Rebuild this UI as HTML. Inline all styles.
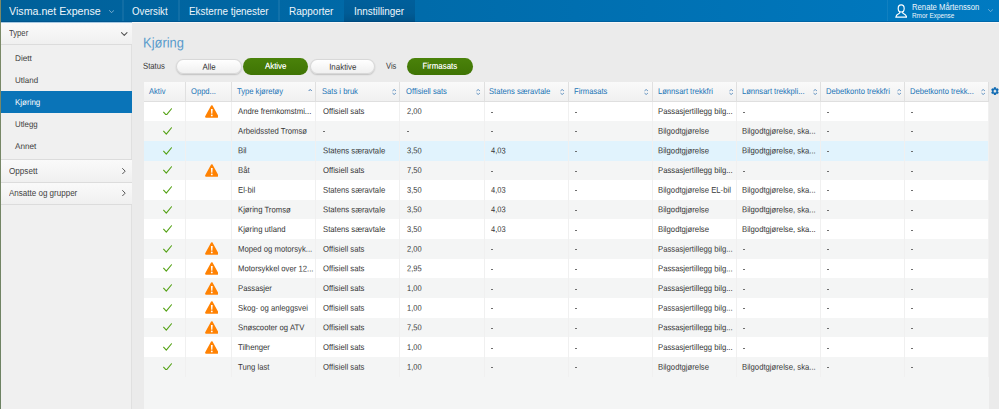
<!DOCTYPE html>
<html><head><meta charset="utf-8"><title>Kjøring</title>
<style>
*{box-sizing:border-box;margin:0;padding:0}
html,body{width:999px;height:409px;overflow:hidden}
body{font-family:"Liberation Sans",sans-serif;background:#ebebeb;position:relative;color:#333}
.x{display:inline-block;white-space:nowrap}
#edge{position:absolute;left:0;top:0;width:1px;height:409px;background:linear-gradient(#7c8a68,#6d8263);z-index:10}
#nav{position:absolute;left:0;top:0;width:999px;height:21.7px;background:linear-gradient(90deg,#006099,#007ac1);color:#fff}
#nav:after{content:'';position:absolute;left:0;bottom:0;width:999px;height:1px;background:rgba(0,40,90,.22)}
#nav .t{position:absolute;top:0;height:21px;line-height:22.6px;font-size:11.1px;white-space:nowrap;color:#eef6fb}
#nav .sep{position:absolute;top:0;width:1.4px;height:21px;background:rgba(255,255,255,.065)}
#nav .act{position:absolute;left:343.7px;top:0;width:71.5px;height:21.7px;background:linear-gradient(#005f9b,#005c96 60%,#005287)}
#navhl{position:absolute;left:132px;top:22px;width:867px;height:1px;background:#f7f7f7}
#side{position:absolute;left:1px;top:22px;width:131.3px;height:387px;background:#f0f0f0;border-right:1px solid #e0e0e0}
#side div{position:absolute;left:0;width:131px;height:22px;line-height:23.1px;font-size:8.3px;color:#424242;white-space:nowrap}
#side .h{padding-left:8.4px;width:130.5px;background:linear-gradient(#fafafa,#f0f0f0);}
#side .i{padding-left:13.9px;width:130px;line-height:23.1px}
#side .sel{background:#0a74b8;color:#fff;width:131px}
#side .ln{height:1px;background:#dcdcdc}
h1{position:absolute;left:143.3px;top:34.2px;font-size:14.2px;font-weight:normal;color:#5a9bcb;line-height:16px}
.lbl{position:absolute;font-size:8.6px;line-height:10px;color:#333}
.pill{position:absolute;top:58.5px;height:15.7px;border-radius:7.4px/7.85px;font-size:8.6px;line-height:15.2px;text-align:center;color:#333;background:linear-gradient(#fff,#f0f0f0);border:1px solid #d8d8d8;box-shadow:0 1px 1.5px rgba(0,0,0,.18)}
.pill.g{top:57.7px;height:16.9px;border-radius:7.8px/8.45px;line-height:17.5px;background:linear-gradient(#4a820a,#3f7404);border:0;color:#fff;box-shadow:none;text-shadow:0 0 .5px rgba(255,255,255,.7)}
#gridbg{position:absolute;left:144px;top:82px;width:845.3px;height:327px;background:#f4f5f5}
#hdr{position:absolute;left:144px;top:82.3px;width:845.3px;height:19.7px;background:linear-gradient(#fafafa,#f0f0f0);border-bottom:1px solid #dfdfdf}
.hc{position:absolute;top:82.3px;height:19.1px;line-height:19.7px;font-size:8.4px;color:#2174b6;padding-left:5.3px;border-right:1px solid #e0e0e0;white-space:nowrap;overflow:hidden}
.so{position:absolute;right:3.1px;top:6.5px}
.row{position:absolute;left:144px;width:845.3px}
.row.w{background:#fff}
.row.s{background:#e1f3fd}
.c{position:absolute;font-size:8.4px;color:#363636;border-right:1px solid #f0f0f0;white-space:nowrap;overflow:hidden}
.ct{position:absolute;left:6.6px;top:0;height:20px;line-height:20px}
.d{position:absolute;width:2.3px;height:1px;background:#6e6e6e}
.ck{position:absolute;left:18.8px;top:5.8px}
.wn{position:absolute;left:18.6px;top:3.4px}
</style></head><body>
<div id="edge"></div>
<div id="nav"><div class="act"></div><div class="sep" style="left:122.2px"></div><div class="sep" style="left:178.4px"></div><div class="sep" style="left:278.40000000000003px"></div><div class="sep" style="left:886.5px"></div><div class="t" style="left:9px;font-size:11.4px"><span class="x" style="transform:scaleX(0.9366);transform-origin:0 50%">Visma.net Expense</span></div><svg viewBox="0 0 8 5" width="5.2" height="3.3" style="position:absolute;left:108.6px;top:9.6px"><path d="M0.6 0.7 L4 4.1 L7.4 0.7" fill="none" stroke="#b9d6ea" stroke-width="1.0" stroke-linecap="round" stroke-linejoin="round"/></svg><div class="t" style="left:132.4px"><span class="x" style="transform:scaleX(0.8746);transform-origin:0 50%">Oversikt</span></div><div class="t" style="left:188.5px"><span class="x" style="transform:scaleX(0.8897);transform-origin:0 50%">Eksterne tjenester</span></div><div class="t" style="left:289.4px"><span class="x" style="transform:scaleX(0.8995);transform-origin:0 50%">Rapporter</span></div><div class="t" style="left:354.4px"><span class="x" style="transform:scaleX(0.8941);transform-origin:0 50%">Innstillinger</span></div><svg viewBox="0 0 12.4 14" width="12.4" height="14" style="position:absolute;left:894.5px;top:3.5px"><path d="M4.7 7.4 L4.7 9.1 C3.2 9.9 1 10.5 0.8 13.2 L11.6 13.2 C11.4 10.5 9.2 9.9 7.7 9.1 L7.7 7.4" fill="none" stroke="#fff" stroke-width="1.15" stroke-linejoin="round" stroke-linecap="round"/><ellipse cx="6.2" cy="4.4" rx="3" ry="3.6" fill="#0077bc" stroke="#fff" stroke-width="1.15"/></svg><div class="t" style="left:911.8px;top:2.2px;height:10px;line-height:10px;font-size:8.5px"><span class="x" style="transform:scaleX(0.9059);transform-origin:0 50%">Renate Mårtensson</span></div><div class="t" style="left:911.8px;top:11px;height:9px;line-height:9px;font-size:7.4px"><span class="x" style="transform:scaleX(0.8663);transform-origin:0 50%">Rmor Expense</span></div><svg viewBox="0 0 8 5" width="5.2" height="3.3" style="position:absolute;left:987.6px;top:9.1px"><path d="M0.6 0.7 L4 4.1 L7.4 0.7" fill="none" stroke="#a5cbe5" stroke-width="1.0" stroke-linecap="round" stroke-linejoin="round"/></svg></div><div id="navhl"></div>
<div id="side"><div class="h" style="top:0"><span class="x" style="transform:scaleX(0.9249);transform-origin:0 50%">Typer</span></div><div class="ln" style="top:22px"></div><div class="ln" style="top:0;background:#a5c9e3"></div><div class="i" style="top:25px"><span class="x" style="transform:translateY(0.00px) scaleX(0.9903) skewY(0.03deg);transform-origin:0 50%">Diett</span></div><div class="i" style="top:47px"><span class="x" style="transform:translateY(0.00px) scaleX(0.9628) skewY(0.03deg);transform-origin:0 50%">Utland</span></div><div class="i sel" style="top:69px"><span class="x" style="transform:translateY(0.00px) scaleX(0.9623) skewY(0.03deg);transform-origin:0 50%">Kjøring</span></div><div class="i" style="top:91px"><span class="x" style="transform:translateY(0.00px) scaleX(0.9461) skewY(0.03deg);transform-origin:0 50%">Utlegg</span></div><div class="i" style="top:113px"><span class="x" style="transform:translateY(0.00px) scaleX(0.9820) skewY(0.03deg);transform-origin:0 50%">Annet</span></div><div class="h" style="top:138px"><span class="x" style="transform:scaleX(0.9771);transform-origin:0 50%">Oppsett</span></div><div class="h" style="top:160px"><span class="x" style="transform:scaleX(0.9674);transform-origin:0 50%">Ansatte og grupper</span></div><div class="ln" style="top:137.4px"></div><div class="ln" style="top:160px"></div><div class="ln" style="top:182px"></div><svg viewBox="0 0 8 5" width="6.5" height="4.1" style="position:absolute;left:120.1px;top:9.9px"><path d="M0.6 0.7 L4 4.1 L7.4 0.7" fill="none" stroke="#505050" stroke-width="1.25" stroke-linecap="round" stroke-linejoin="round"/></svg><svg viewBox="0 0 5 8" width="3.9" height="6.3" style="position:absolute;left:121.2px;top:146.2px"><path d="M0.7 0.6 L4.1 4 L0.7 7.4" fill="none" stroke="#505050" stroke-width="1.25" stroke-linecap="round" stroke-linejoin="round"/></svg><svg viewBox="0 0 5 8" width="3.9" height="6.3" style="position:absolute;left:121.2px;top:168.2px"><path d="M0.7 0.6 L4.1 4 L0.7 7.4" fill="none" stroke="#505050" stroke-width="1.25" stroke-linecap="round" stroke-linejoin="round"/></svg></div>
<h1><span class="x" style="transform:translateY(0.60px) scaleX(0.9115) skewY(0.03deg);transform-origin:0 50%">Kjøring</span></h1><div class="lbl" style="left:143.4px;top:60px"><span class="x" style="transform:translateY(0.80px) scaleX(0.8982) skewY(0.03deg);transform-origin:0 50%">Status</span></div><div class="pill" style="left:176.2px;width:65.9px"><span class="x" style="transform:translateY(-0.20px) scaleX(0.9210) skewY(0.03deg);transform-origin:50% 50%">Alle</span></div><div class="pill g" style="left:242.7px;width:65.8px"><span class="x" style="transform:translateY(-0.20px) scaleX(0.9210) skewY(0.03deg);transform-origin:50% 50%">Aktive</span></div><div class="pill" style="left:309.9px;width:65.4px"><span class="x" style="transform:translateY(-0.20px) scaleX(0.9210) skewY(0.03deg);transform-origin:50% 50%">Inaktive</span></div><div class="lbl" style="left:385.6px;top:60px"><span class="x" style="transform:translateY(0.80px) scaleX(0.8819) skewY(0.03deg);transform-origin:0 50%">Vis</span></div><div class="pill g" style="left:406.5px;width:66.2px"><span class="x" style="transform:translateY(-0.20px) scaleX(0.9210) skewY(0.03deg);transform-origin:50% 50%">Firmasats</span></div>
<div id="gridbg"></div><div id="hdr"></div><div class="hc" style="left:144.0px;width:42.0px;padding-left:5.3px"><span class="x" style="transform:translateY(0.00px) scaleX(0.9080) skewY(0.03deg);transform-origin:0 50%">Aktiv</span></div><div class="hc" style="left:186.0px;width:45.87px;padding-left:5.3px"><span class="x" style="transform:translateY(0.00px) scaleX(0.9080) skewY(0.03deg);transform-origin:0 50%">Oppd...</span></div><div class="hc" style="left:231.87px;width:84.33px;padding-left:5.5px"><span class="x" style="transform:translateY(0.00px) scaleX(0.9080) skewY(0.03deg);transform-origin:0 50%">Type kjøretøy</span><svg class="so" style="top:6.3px;right:2.9px" viewBox="0 0 44 26" width="4.4" height="2.6"><path d="M4 22 L22 5 L40 22" fill="none" stroke="#3f78b2" stroke-width="9.5" stroke-linecap="round" stroke-linejoin="round"/></svg></div><div class="hc" style="left:316.2px;width:84.3px;padding-left:5.6px"><span class="x" style="transform:translateY(0.00px) scaleX(0.9080) skewY(0.03deg);transform-origin:0 50%">Sats i bruk</span><svg class="so" viewBox="0 0 44 60" width="4.4" height="6"><path d="M5 19 L22 5 L39 19 M5 41 L22 55 L39 41" fill="none" stroke="#4a82b8" stroke-width="8.6" stroke-linecap="butt" stroke-linejoin="round"/></svg></div><div class="hc" style="left:400.5px;width:84.15px;padding-left:5.65px"><span class="x" style="transform:translateY(0.00px) scaleX(0.9080) skewY(0.03deg);transform-origin:0 50%">Offisiell sats</span><svg class="so" viewBox="0 0 44 60" width="4.4" height="6"><path d="M5 19 L22 5 L39 19 M5 41 L22 55 L39 41" fill="none" stroke="#4a82b8" stroke-width="8.6" stroke-linecap="butt" stroke-linejoin="round"/></svg></div><div class="hc" style="left:484.65px;width:84.2px;padding-left:4.65px"><span class="x" style="transform:translateY(0.00px) scaleX(0.9080) skewY(0.03deg);transform-origin:0 50%">Statens særavtale</span><svg class="so" viewBox="0 0 44 60" width="4.4" height="6"><path d="M5 19 L22 5 L39 19 M5 41 L22 55 L39 41" fill="none" stroke="#4a82b8" stroke-width="8.6" stroke-linecap="butt" stroke-linejoin="round"/></svg></div><div class="hc" style="left:568.85px;width:84.1px;padding-left:4.9px"><span class="x" style="transform:translateY(0.00px) scaleX(0.9080) skewY(0.03deg);transform-origin:0 50%">Firmasats</span><svg class="so" viewBox="0 0 44 60" width="4.4" height="6"><path d="M5 19 L22 5 L39 19 M5 41 L22 55 L39 41" fill="none" stroke="#4a82b8" stroke-width="8.6" stroke-linecap="butt" stroke-linejoin="round"/></svg></div><div class="hc" style="left:652.95px;width:84.1px;padding-left:5.3px"><span class="x" style="transform:translateY(0.00px) scaleX(0.9080) skewY(0.03deg);transform-origin:0 50%">Lønnsart trekkfri</span><svg class="so" viewBox="0 0 44 60" width="4.4" height="6"><path d="M5 19 L22 5 L39 19 M5 41 L22 55 L39 41" fill="none" stroke="#4a82b8" stroke-width="8.6" stroke-linecap="butt" stroke-linejoin="round"/></svg></div><div class="hc" style="left:737.05px;width:84.05px;padding-left:4.9px"><span class="x" style="transform:translateY(0.00px) scaleX(0.9080) skewY(0.03deg);transform-origin:0 50%">Lønnsart trekkpli...</span><svg class="so" viewBox="0 0 44 60" width="4.4" height="6"><path d="M5 19 L22 5 L39 19 M5 41 L22 55 L39 41" fill="none" stroke="#4a82b8" stroke-width="8.6" stroke-linecap="butt" stroke-linejoin="round"/></svg></div><div class="hc" style="left:821.1px;width:84.1px;padding-left:4.9px"><span class="x" style="transform:translateY(0.00px) scaleX(0.9080) skewY(0.03deg);transform-origin:0 50%">Debetkonto trekkfri</span><svg class="so" viewBox="0 0 44 60" width="4.4" height="6"><path d="M5 19 L22 5 L39 19 M5 41 L22 55 L39 41" fill="none" stroke="#4a82b8" stroke-width="8.6" stroke-linecap="butt" stroke-linejoin="round"/></svg></div><div class="hc" style="left:905.2px;width:84.1px;padding-left:5.3px"><span class="x" style="transform:translateY(0.00px) scaleX(0.9080) skewY(0.03deg);transform-origin:0 50%">Debetkonto trekk...</span><svg class="so" viewBox="0 0 44 60" width="4.4" height="6"><path d="M5 19 L22 5 L39 19 M5 41 L22 55 L39 41" fill="none" stroke="#4a82b8" stroke-width="8.6" stroke-linecap="butt" stroke-linejoin="round"/></svg></div><svg viewBox="-10.4 -10.4 20.8 20.8" preserveAspectRatio="none" width="7.9" height="8.3" style="position:absolute;left:991.2px;top:86.9px"><path fill="#0d6ab3" fill-rule="evenodd" stroke="#0d6ab3" stroke-width="0.8" stroke-linejoin="round" d="M-2.58 -6.94 L-1.98 -9.80 L1.98 -9.80 L2.58 -6.94 L4.72 -5.70 L7.50 -6.61 L9.48 -3.19 L7.30 -1.23 L7.30 1.23 L9.48 3.19 L7.50 6.61 L4.72 5.70 L2.58 6.94 L1.98 9.80 L-1.98 9.80 L-2.58 6.94 L-4.72 5.70 L-7.50 6.61 L-9.48 3.19 L-7.30 1.23 L-7.30 -1.23 L-9.48 -3.19 L-7.50 -6.61 L-4.72 -5.70 Z M4.00 0 A4.00 4.00 0 1 0 -4.00 0 A4.00 4.00 0 1 0 4.00 0 Z"/></svg>
<div class="row w" style="top:101.75px;height:19.61px"></div><div class="c" style="left:144.0px;top:101.75px;width:42.0px;height:19.61px"><svg class="ck" viewBox="0 0 9.4 8" width="9.1" height="7.9"><path d="M0.6 4.3 L3.4 7.3 L8.8 0.7" fill="none" stroke="#55a216" stroke-width="1.15" stroke-linecap="round" stroke-linejoin="round"/></svg></div><div class="c" style="left:186.0px;top:101.75px;width:45.87px;height:19.61px"><svg class="wn" viewBox="0 0 14 13.4" width="13.6" height="13"><path d="M7 1.2 L12.9 12.1 L1.1 12.1 Z" fill="#ff8203" stroke="#ff8203" stroke-width="2" stroke-linejoin="round"/><path d="M6.1 4.2 h1.8 l-0.35 4.7 h-1.1 Z" fill="#fff"/><circle cx="7" cy="10.7" r="0.95" fill="#fff"/></svg></div><div class="c" style="left:231.87px;top:101.75px;width:84.33px;height:19.61px"><div class="ct" style="left:6.2px;top:-0.75px"><span class="x" style="transform:translateY(0.05px) scaleX(0.9210) skewY(0.03deg);transform-origin:0 50%">Andre fremkomstmi...</span></div></div><div class="c" style="left:316.2px;top:101.75px;width:84.3px;height:19.61px"><div class="ct" style="left:6.7px;top:-0.75px"><span class="x" style="transform:translateY(0.05px) scaleX(0.9210) skewY(0.03deg);transform-origin:0 50%">Offisiell sats</span></div></div><div class="c" style="left:400.5px;top:101.75px;width:84.15px;height:19.61px"><div class="ct" style="left:6.5px;top:-0.75px"><span class="x" style="transform:translateY(0.05px) scaleX(0.8930) skewY(0.03deg);transform-origin:0 50%">2,00</span></div></div><div class="c" style="left:484.65px;top:101.75px;width:84.2px;height:19.61px"><i class="d" style="left:6.35px;top:10.05px"></i></div><div class="c" style="left:568.85px;top:101.75px;width:84.1px;height:19.61px"><i class="d" style="left:6.3px;top:10.05px"></i></div><div class="c" style="left:652.95px;top:101.75px;width:84.1px;height:19.61px"><div class="ct" style="left:5.4px;top:-0.75px"><span class="x" style="transform:translateY(0.05px) scaleX(0.9210) skewY(0.03deg);transform-origin:0 50%">Passasjertillegg bilg...</span></div></div><div class="c" style="left:737.05px;top:101.75px;width:84.05px;height:19.61px"><i class="d" style="left:5.5px;top:10.05px"></i></div><div class="c" style="left:821.1px;top:101.75px;width:84.1px;height:19.61px"><i class="d" style="left:5.45px;top:10.05px"></i></div><div class="c" style="left:905.2px;top:101.75px;width:84.1px;height:19.61px"><i class="d" style="left:5.35px;top:10.05px"></i></div>
<div class="row " style="top:121.36px;height:19.61px"></div><div class="c" style="left:144.0px;top:121.36px;width:42.0px;height:19.61px"><svg class="ck" viewBox="0 0 9.4 8" width="9.1" height="7.9"><path d="M0.6 4.3 L3.4 7.3 L8.8 0.7" fill="none" stroke="#55a216" stroke-width="1.15" stroke-linecap="round" stroke-linejoin="round"/></svg></div><div class="c" style="left:186.0px;top:121.36px;width:45.87px;height:19.61px"></div><div class="c" style="left:231.87px;top:121.36px;width:84.33px;height:19.61px"><div class="ct" style="left:6.2px;top:-0.36px"><span class="x" style="transform:translateY(-0.29px) scaleX(0.9210) skewY(0.03deg);transform-origin:0 50%">Arbeidssted Tromsø</span></div></div><div class="c" style="left:316.2px;top:121.36px;width:84.3px;height:19.61px"><i class="d" style="left:6.9px;top:10.1px"></i></div><div class="c" style="left:400.5px;top:121.36px;width:84.15px;height:19.61px"><i class="d" style="left:6.7px;top:10.1px"></i></div><div class="c" style="left:484.65px;top:121.36px;width:84.2px;height:19.61px"><i class="d" style="left:6.35px;top:10.1px"></i></div><div class="c" style="left:568.85px;top:121.36px;width:84.1px;height:19.61px"><i class="d" style="left:6.3px;top:10.1px"></i></div><div class="c" style="left:652.95px;top:121.36px;width:84.1px;height:19.61px"><div class="ct" style="left:5.4px;top:-0.36px"><span class="x" style="transform:translateY(-0.29px) scaleX(0.9210) skewY(0.03deg);transform-origin:0 50%">Bilgodtgjørelse</span></div></div><div class="c" style="left:737.05px;top:121.36px;width:84.05px;height:19.61px"><div class="ct" style="left:5.3px;top:-0.36px"><span class="x" style="transform:translateY(-0.29px) scaleX(0.9210) skewY(0.03deg);transform-origin:0 50%">Bilgodtgjørelse, ska...</span></div></div><div class="c" style="left:821.1px;top:121.36px;width:84.1px;height:19.61px"><i class="d" style="left:5.45px;top:10.1px"></i></div><div class="c" style="left:905.2px;top:121.36px;width:84.1px;height:19.61px"><i class="d" style="left:5.35px;top:10.1px"></i></div>
<div class="row s" style="top:140.98px;height:19.61px"></div><div class="c" style="left:144.0px;top:140.98px;width:42.0px;height:19.61px"><svg class="ck" viewBox="0 0 9.4 8" width="9.1" height="7.9"><path d="M0.6 4.3 L3.4 7.3 L8.8 0.7" fill="none" stroke="#55a216" stroke-width="1.15" stroke-linecap="round" stroke-linejoin="round"/></svg></div><div class="c" style="left:186.0px;top:140.98px;width:45.87px;height:19.61px"></div><div class="c" style="left:231.87px;top:140.98px;width:84.33px;height:19.61px"><div class="ct" style="left:6.2px;top:-0.98px"><span class="x" style="transform:translateY(0.37px) scaleX(0.9210) skewY(0.03deg);transform-origin:0 50%">Bil</span></div></div><div class="c" style="left:316.2px;top:140.98px;width:84.3px;height:19.61px"><div class="ct" style="left:6.7px;top:-0.98px"><span class="x" style="transform:translateY(0.37px) scaleX(0.9210) skewY(0.03deg);transform-origin:0 50%">Statens særavtale</span></div></div><div class="c" style="left:400.5px;top:140.98px;width:84.15px;height:19.61px"><div class="ct" style="left:6.5px;top:-0.98px"><span class="x" style="transform:translateY(0.37px) scaleX(0.8930) skewY(0.03deg);transform-origin:0 50%">3,50</span></div></div><div class="c" style="left:484.65px;top:140.98px;width:84.2px;height:19.61px"><div class="ct" style="left:6.15px;top:-0.98px"><span class="x" style="transform:translateY(0.37px) scaleX(0.8930) skewY(0.03deg);transform-origin:0 50%">4,03</span></div></div><div class="c" style="left:568.85px;top:140.98px;width:84.1px;height:19.61px"><i class="d" style="left:6.3px;top:10.14px"></i></div><div class="c" style="left:652.95px;top:140.98px;width:84.1px;height:19.61px"><div class="ct" style="left:5.4px;top:-0.98px"><span class="x" style="transform:translateY(0.37px) scaleX(0.9210) skewY(0.03deg);transform-origin:0 50%">Bilgodtgjørelse</span></div></div><div class="c" style="left:737.05px;top:140.98px;width:84.05px;height:19.61px"><div class="ct" style="left:5.3px;top:-0.98px"><span class="x" style="transform:translateY(0.37px) scaleX(0.9210) skewY(0.03deg);transform-origin:0 50%">Bilgodtgjørelse, ska...</span></div></div><div class="c" style="left:821.1px;top:140.98px;width:84.1px;height:19.61px"><i class="d" style="left:5.45px;top:10.14px"></i></div><div class="c" style="left:905.2px;top:140.98px;width:84.1px;height:19.61px"><i class="d" style="left:5.35px;top:10.14px"></i></div>
<div class="row " style="top:160.59px;height:19.61px"></div><div class="c" style="left:144.0px;top:160.59px;width:42.0px;height:19.61px"><svg class="ck" viewBox="0 0 9.4 8" width="9.1" height="7.9"><path d="M0.6 4.3 L3.4 7.3 L8.8 0.7" fill="none" stroke="#55a216" stroke-width="1.15" stroke-linecap="round" stroke-linejoin="round"/></svg></div><div class="c" style="left:186.0px;top:160.59px;width:45.87px;height:19.61px"><svg class="wn" viewBox="0 0 14 13.4" width="13.6" height="13"><path d="M7 1.2 L12.9 12.1 L1.1 12.1 Z" fill="#ff8203" stroke="#ff8203" stroke-width="2" stroke-linejoin="round"/><path d="M6.1 4.2 h1.8 l-0.35 4.7 h-1.1 Z" fill="#fff"/><circle cx="7" cy="10.7" r="0.95" fill="#fff"/></svg></div><div class="c" style="left:231.87px;top:160.59px;width:84.33px;height:19.61px"><div class="ct" style="left:6.2px;top:-0.59px"><span class="x" style="transform:translateY(0.04px) scaleX(0.9210) skewY(0.03deg);transform-origin:0 50%">Båt</span></div></div><div class="c" style="left:316.2px;top:160.59px;width:84.3px;height:19.61px"><div class="ct" style="left:6.7px;top:-0.59px"><span class="x" style="transform:translateY(0.04px) scaleX(0.9210) skewY(0.03deg);transform-origin:0 50%">Offisiell sats</span></div></div><div class="c" style="left:400.5px;top:160.59px;width:84.15px;height:19.61px"><div class="ct" style="left:6.5px;top:-0.59px"><span class="x" style="transform:translateY(0.04px) scaleX(0.8930) skewY(0.03deg);transform-origin:0 50%">7,50</span></div></div><div class="c" style="left:484.65px;top:160.59px;width:84.2px;height:19.61px"><i class="d" style="left:6.35px;top:10.2px"></i></div><div class="c" style="left:568.85px;top:160.59px;width:84.1px;height:19.61px"><i class="d" style="left:6.3px;top:10.2px"></i></div><div class="c" style="left:652.95px;top:160.59px;width:84.1px;height:19.61px"><div class="ct" style="left:5.4px;top:-0.59px"><span class="x" style="transform:translateY(0.04px) scaleX(0.9210) skewY(0.03deg);transform-origin:0 50%">Passasjertillegg bilg...</span></div></div><div class="c" style="left:737.05px;top:160.59px;width:84.05px;height:19.61px"><i class="d" style="left:5.5px;top:10.2px"></i></div><div class="c" style="left:821.1px;top:160.59px;width:84.1px;height:19.61px"><i class="d" style="left:5.45px;top:10.2px"></i></div><div class="c" style="left:905.2px;top:160.59px;width:84.1px;height:19.61px"><i class="d" style="left:5.35px;top:10.2px"></i></div>
<div class="row w" style="top:180.21px;height:19.61px"></div><div class="c" style="left:144.0px;top:180.21px;width:42.0px;height:19.61px"><svg class="ck" viewBox="0 0 9.4 8" width="9.1" height="7.9"><path d="M0.6 4.3 L3.4 7.3 L8.8 0.7" fill="none" stroke="#55a216" stroke-width="1.15" stroke-linecap="round" stroke-linejoin="round"/></svg></div><div class="c" style="left:186.0px;top:180.21px;width:45.87px;height:19.61px"></div><div class="c" style="left:231.87px;top:180.21px;width:84.33px;height:19.61px"><div class="ct" style="left:6.2px;top:-0.21px"><span class="x" style="transform:translateY(-0.30px) scaleX(0.9210) skewY(0.03deg);transform-origin:0 50%">El-bil</span></div></div><div class="c" style="left:316.2px;top:180.21px;width:84.3px;height:19.61px"><div class="ct" style="left:6.7px;top:-0.21px"><span class="x" style="transform:translateY(-0.30px) scaleX(0.9210) skewY(0.03deg);transform-origin:0 50%">Statens særavtale</span></div></div><div class="c" style="left:400.5px;top:180.21px;width:84.15px;height:19.61px"><div class="ct" style="left:6.5px;top:-0.21px"><span class="x" style="transform:translateY(-0.30px) scaleX(0.8930) skewY(0.03deg);transform-origin:0 50%">3,50</span></div></div><div class="c" style="left:484.65px;top:180.21px;width:84.2px;height:19.61px"><div class="ct" style="left:6.15px;top:-0.21px"><span class="x" style="transform:translateY(-0.30px) scaleX(0.8930) skewY(0.03deg);transform-origin:0 50%">4,03</span></div></div><div class="c" style="left:568.85px;top:180.21px;width:84.1px;height:19.61px"><i class="d" style="left:6.3px;top:10.24px"></i></div><div class="c" style="left:652.95px;top:180.21px;width:84.1px;height:19.61px"><div class="ct" style="left:5.4px;top:-0.21px"><span class="x" style="transform:translateY(-0.30px) scaleX(0.9210) skewY(0.03deg);transform-origin:0 50%">Bilgodtgjørelse EL-bil</span></div></div><div class="c" style="left:737.05px;top:180.21px;width:84.05px;height:19.61px"><div class="ct" style="left:5.3px;top:-0.21px"><span class="x" style="transform:translateY(-0.30px) scaleX(0.9210) skewY(0.03deg);transform-origin:0 50%">Bilgodtgjørelse, ska...</span></div></div><div class="c" style="left:821.1px;top:180.21px;width:84.1px;height:19.61px"><i class="d" style="left:5.45px;top:10.24px"></i></div><div class="c" style="left:905.2px;top:180.21px;width:84.1px;height:19.61px"><i class="d" style="left:5.35px;top:10.24px"></i></div>
<div class="row " style="top:199.82px;height:19.61px"></div><div class="c" style="left:144.0px;top:199.82px;width:42.0px;height:19.61px"><svg class="ck" viewBox="0 0 9.4 8" width="9.1" height="7.9"><path d="M0.6 4.3 L3.4 7.3 L8.8 0.7" fill="none" stroke="#55a216" stroke-width="1.15" stroke-linecap="round" stroke-linejoin="round"/></svg></div><div class="c" style="left:186.0px;top:199.82px;width:45.87px;height:19.61px"></div><div class="c" style="left:231.87px;top:199.82px;width:84.33px;height:19.61px"><div class="ct" style="left:6.2px;top:-0.82px"><span class="x" style="transform:translateY(0.36px) scaleX(0.9210) skewY(0.03deg);transform-origin:0 50%">Kjøring Tromsø</span></div></div><div class="c" style="left:316.2px;top:199.82px;width:84.3px;height:19.61px"><div class="ct" style="left:6.7px;top:-0.82px"><span class="x" style="transform:translateY(0.36px) scaleX(0.9210) skewY(0.03deg);transform-origin:0 50%">Statens særavtale</span></div></div><div class="c" style="left:400.5px;top:199.82px;width:84.15px;height:19.61px"><div class="ct" style="left:6.5px;top:-0.82px"><span class="x" style="transform:translateY(0.36px) scaleX(0.8930) skewY(0.03deg);transform-origin:0 50%">3,50</span></div></div><div class="c" style="left:484.65px;top:199.82px;width:84.2px;height:19.61px"><div class="ct" style="left:6.15px;top:-0.82px"><span class="x" style="transform:translateY(0.36px) scaleX(0.8930) skewY(0.03deg);transform-origin:0 50%">4,03</span></div></div><div class="c" style="left:568.85px;top:199.82px;width:84.1px;height:19.61px"><i class="d" style="left:6.3px;top:10.29px"></i></div><div class="c" style="left:652.95px;top:199.82px;width:84.1px;height:19.61px"><div class="ct" style="left:5.4px;top:-0.82px"><span class="x" style="transform:translateY(0.36px) scaleX(0.9210) skewY(0.03deg);transform-origin:0 50%">Bilgodtgjørelse</span></div></div><div class="c" style="left:737.05px;top:199.82px;width:84.05px;height:19.61px"><div class="ct" style="left:5.3px;top:-0.82px"><span class="x" style="transform:translateY(0.36px) scaleX(0.9210) skewY(0.03deg);transform-origin:0 50%">Bilgodtgjørelse, ska...</span></div></div><div class="c" style="left:821.1px;top:199.82px;width:84.1px;height:19.61px"><i class="d" style="left:5.45px;top:10.29px"></i></div><div class="c" style="left:905.2px;top:199.82px;width:84.1px;height:19.61px"><i class="d" style="left:5.35px;top:10.29px"></i></div>
<div class="row w" style="top:219.44px;height:19.61px"></div><div class="c" style="left:144.0px;top:219.44px;width:42.0px;height:19.61px"><svg class="ck" viewBox="0 0 9.4 8" width="9.1" height="7.9"><path d="M0.6 4.3 L3.4 7.3 L8.8 0.7" fill="none" stroke="#55a216" stroke-width="1.15" stroke-linecap="round" stroke-linejoin="round"/></svg></div><div class="c" style="left:186.0px;top:219.44px;width:45.87px;height:19.61px"></div><div class="c" style="left:231.87px;top:219.44px;width:84.33px;height:19.61px"><div class="ct" style="left:6.2px;top:-0.44px"><span class="x" style="transform:translateY(0.02px) scaleX(0.9210) skewY(0.03deg);transform-origin:0 50%">Kjøring utland</span></div></div><div class="c" style="left:316.2px;top:219.44px;width:84.3px;height:19.61px"><div class="ct" style="left:6.7px;top:-0.44px"><span class="x" style="transform:translateY(0.02px) scaleX(0.9210) skewY(0.03deg);transform-origin:0 50%">Statens særavtale</span></div></div><div class="c" style="left:400.5px;top:219.44px;width:84.15px;height:19.61px"><div class="ct" style="left:6.5px;top:-0.44px"><span class="x" style="transform:translateY(0.02px) scaleX(0.8930) skewY(0.03deg);transform-origin:0 50%">3,50</span></div></div><div class="c" style="left:484.65px;top:219.44px;width:84.2px;height:19.61px"><div class="ct" style="left:6.15px;top:-0.44px"><span class="x" style="transform:translateY(0.02px) scaleX(0.8930) skewY(0.03deg);transform-origin:0 50%">4,03</span></div></div><div class="c" style="left:568.85px;top:219.44px;width:84.1px;height:19.61px"><i class="d" style="left:6.3px;top:10.33px"></i></div><div class="c" style="left:652.95px;top:219.44px;width:84.1px;height:19.61px"><div class="ct" style="left:5.4px;top:-0.44px"><span class="x" style="transform:translateY(0.02px) scaleX(0.9210) skewY(0.03deg);transform-origin:0 50%">Bilgodtgjørelse</span></div></div><div class="c" style="left:737.05px;top:219.44px;width:84.05px;height:19.61px"><div class="ct" style="left:5.3px;top:-0.44px"><span class="x" style="transform:translateY(0.02px) scaleX(0.9210) skewY(0.03deg);transform-origin:0 50%">Bilgodtgjørelse, ska...</span></div></div><div class="c" style="left:821.1px;top:219.44px;width:84.1px;height:19.61px"><i class="d" style="left:5.45px;top:10.33px"></i></div><div class="c" style="left:905.2px;top:219.44px;width:84.1px;height:19.61px"><i class="d" style="left:5.35px;top:10.33px"></i></div>
<div class="row " style="top:239.05px;height:19.61px"></div><div class="c" style="left:144.0px;top:239.05px;width:42.0px;height:19.61px"><svg class="ck" viewBox="0 0 9.4 8" width="9.1" height="7.9"><path d="M0.6 4.3 L3.4 7.3 L8.8 0.7" fill="none" stroke="#55a216" stroke-width="1.15" stroke-linecap="round" stroke-linejoin="round"/></svg></div><div class="c" style="left:186.0px;top:239.05px;width:45.87px;height:19.61px"><svg class="wn" viewBox="0 0 14 13.4" width="13.6" height="13"><path d="M7 1.2 L12.9 12.1 L1.1 12.1 Z" fill="#ff8203" stroke="#ff8203" stroke-width="2" stroke-linejoin="round"/><path d="M6.1 4.2 h1.8 l-0.35 4.7 h-1.1 Z" fill="#fff"/><circle cx="7" cy="10.7" r="0.95" fill="#fff"/></svg></div><div class="c" style="left:231.87px;top:239.05px;width:84.33px;height:19.61px"><div class="ct" style="left:6.2px;top:-0.05px"><span class="x" style="transform:translateY(-0.32px) scaleX(0.9210) skewY(0.03deg);transform-origin:0 50%">Moped og motorsyk...</span></div></div><div class="c" style="left:316.2px;top:239.05px;width:84.3px;height:19.61px"><div class="ct" style="left:6.7px;top:-0.05px"><span class="x" style="transform:translateY(-0.32px) scaleX(0.9210) skewY(0.03deg);transform-origin:0 50%">Offisiell sats</span></div></div><div class="c" style="left:400.5px;top:239.05px;width:84.15px;height:19.61px"><div class="ct" style="left:6.5px;top:-0.05px"><span class="x" style="transform:translateY(-0.32px) scaleX(0.8930) skewY(0.03deg);transform-origin:0 50%">2,00</span></div></div><div class="c" style="left:484.65px;top:239.05px;width:84.2px;height:19.61px"><i class="d" style="left:6.35px;top:10.38px"></i></div><div class="c" style="left:568.85px;top:239.05px;width:84.1px;height:19.61px"><i class="d" style="left:6.3px;top:10.38px"></i></div><div class="c" style="left:652.95px;top:239.05px;width:84.1px;height:19.61px"><div class="ct" style="left:5.4px;top:-0.05px"><span class="x" style="transform:translateY(-0.32px) scaleX(0.9210) skewY(0.03deg);transform-origin:0 50%">Passasjertillegg bilg...</span></div></div><div class="c" style="left:737.05px;top:239.05px;width:84.05px;height:19.61px"><i class="d" style="left:5.5px;top:10.38px"></i></div><div class="c" style="left:821.1px;top:239.05px;width:84.1px;height:19.61px"><i class="d" style="left:5.45px;top:10.38px"></i></div><div class="c" style="left:905.2px;top:239.05px;width:84.1px;height:19.61px"><i class="d" style="left:5.35px;top:10.38px"></i></div>
<div class="row w" style="top:258.67px;height:19.61px"></div><div class="c" style="left:144.0px;top:258.67px;width:42.0px;height:19.61px"><svg class="ck" viewBox="0 0 9.4 8" width="9.1" height="7.9"><path d="M0.6 4.3 L3.4 7.3 L8.8 0.7" fill="none" stroke="#55a216" stroke-width="1.15" stroke-linecap="round" stroke-linejoin="round"/></svg></div><div class="c" style="left:186.0px;top:258.67px;width:45.87px;height:19.61px"><svg class="wn" viewBox="0 0 14 13.4" width="13.6" height="13"><path d="M7 1.2 L12.9 12.1 L1.1 12.1 Z" fill="#ff8203" stroke="#ff8203" stroke-width="2" stroke-linejoin="round"/><path d="M6.1 4.2 h1.8 l-0.35 4.7 h-1.1 Z" fill="#fff"/><circle cx="7" cy="10.7" r="0.95" fill="#fff"/></svg></div><div class="c" style="left:231.87px;top:258.67px;width:84.33px;height:19.61px"><div class="ct" style="left:6.2px;top:-0.67px"><span class="x" style="transform:translateY(0.35px) scaleX(0.9210) skewY(0.03deg);transform-origin:0 50%">Motorsykkel over 12...</span></div></div><div class="c" style="left:316.2px;top:258.67px;width:84.3px;height:19.61px"><div class="ct" style="left:6.7px;top:-0.67px"><span class="x" style="transform:translateY(0.35px) scaleX(0.9210) skewY(0.03deg);transform-origin:0 50%">Offisiell sats</span></div></div><div class="c" style="left:400.5px;top:258.67px;width:84.15px;height:19.61px"><div class="ct" style="left:6.5px;top:-0.67px"><span class="x" style="transform:translateY(0.35px) scaleX(0.8930) skewY(0.03deg);transform-origin:0 50%">2,95</span></div></div><div class="c" style="left:484.65px;top:258.67px;width:84.2px;height:19.61px"><i class="d" style="left:6.35px;top:10.43px"></i></div><div class="c" style="left:568.85px;top:258.67px;width:84.1px;height:19.61px"><i class="d" style="left:6.3px;top:10.43px"></i></div><div class="c" style="left:652.95px;top:258.67px;width:84.1px;height:19.61px"><div class="ct" style="left:5.4px;top:-0.67px"><span class="x" style="transform:translateY(0.35px) scaleX(0.9210) skewY(0.03deg);transform-origin:0 50%">Passasjertillegg bilg...</span></div></div><div class="c" style="left:737.05px;top:258.67px;width:84.05px;height:19.61px"><i class="d" style="left:5.5px;top:10.43px"></i></div><div class="c" style="left:821.1px;top:258.67px;width:84.1px;height:19.61px"><i class="d" style="left:5.45px;top:10.43px"></i></div><div class="c" style="left:905.2px;top:258.67px;width:84.1px;height:19.61px"><i class="d" style="left:5.35px;top:10.43px"></i></div>
<div class="row " style="top:278.28px;height:19.61px"></div><div class="c" style="left:144.0px;top:278.28px;width:42.0px;height:19.61px"><svg class="ck" viewBox="0 0 9.4 8" width="9.1" height="7.9"><path d="M0.6 4.3 L3.4 7.3 L8.8 0.7" fill="none" stroke="#55a216" stroke-width="1.15" stroke-linecap="round" stroke-linejoin="round"/></svg></div><div class="c" style="left:186.0px;top:278.28px;width:45.87px;height:19.61px"><svg class="wn" viewBox="0 0 14 13.4" width="13.6" height="13"><path d="M7 1.2 L12.9 12.1 L1.1 12.1 Z" fill="#ff8203" stroke="#ff8203" stroke-width="2" stroke-linejoin="round"/><path d="M6.1 4.2 h1.8 l-0.35 4.7 h-1.1 Z" fill="#fff"/><circle cx="7" cy="10.7" r="0.95" fill="#fff"/></svg></div><div class="c" style="left:231.87px;top:278.28px;width:84.33px;height:19.61px"><div class="ct" style="left:6.2px;top:-0.28px"><span class="x" style="transform:translateY(0.01px) scaleX(0.9210) skewY(0.03deg);transform-origin:0 50%">Passasjer</span></div></div><div class="c" style="left:316.2px;top:278.28px;width:84.3px;height:19.61px"><div class="ct" style="left:6.7px;top:-0.28px"><span class="x" style="transform:translateY(0.01px) scaleX(0.9210) skewY(0.03deg);transform-origin:0 50%">Offisiell sats</span></div></div><div class="c" style="left:400.5px;top:278.28px;width:84.15px;height:19.61px"><div class="ct" style="left:6.5px;top:-0.28px"><span class="x" style="transform:translateY(0.01px) scaleX(0.8930) skewY(0.03deg);transform-origin:0 50%">1,00</span></div></div><div class="c" style="left:484.65px;top:278.28px;width:84.2px;height:19.61px"><i class="d" style="left:6.35px;top:10.48px"></i></div><div class="c" style="left:568.85px;top:278.28px;width:84.1px;height:19.61px"><i class="d" style="left:6.3px;top:10.48px"></i></div><div class="c" style="left:652.95px;top:278.28px;width:84.1px;height:19.61px"><div class="ct" style="left:5.4px;top:-0.28px"><span class="x" style="transform:translateY(0.01px) scaleX(0.9210) skewY(0.03deg);transform-origin:0 50%">Passasjertillegg bilg...</span></div></div><div class="c" style="left:737.05px;top:278.28px;width:84.05px;height:19.61px"><i class="d" style="left:5.5px;top:10.48px"></i></div><div class="c" style="left:821.1px;top:278.28px;width:84.1px;height:19.61px"><i class="d" style="left:5.45px;top:10.48px"></i></div><div class="c" style="left:905.2px;top:278.28px;width:84.1px;height:19.61px"><i class="d" style="left:5.35px;top:10.48px"></i></div>
<div class="row w" style="top:297.9px;height:19.61px"></div><div class="c" style="left:144.0px;top:297.9px;width:42.0px;height:19.61px"><svg class="ck" viewBox="0 0 9.4 8" width="9.1" height="7.9"><path d="M0.6 4.3 L3.4 7.3 L8.8 0.7" fill="none" stroke="#55a216" stroke-width="1.15" stroke-linecap="round" stroke-linejoin="round"/></svg></div><div class="c" style="left:186.0px;top:297.9px;width:45.87px;height:19.61px"><svg class="wn" viewBox="0 0 14 13.4" width="13.6" height="13"><path d="M7 1.2 L12.9 12.1 L1.1 12.1 Z" fill="#ff8203" stroke="#ff8203" stroke-width="2" stroke-linejoin="round"/><path d="M6.1 4.2 h1.8 l-0.35 4.7 h-1.1 Z" fill="#fff"/><circle cx="7" cy="10.7" r="0.95" fill="#fff"/></svg></div><div class="c" style="left:231.87px;top:297.9px;width:84.33px;height:19.61px"><div class="ct" style="left:6.2px;top:-0.9px"><span class="x" style="transform:translateY(0.67px) scaleX(0.9210) skewY(0.03deg);transform-origin:0 50%">Skog- og anleggsvei</span></div></div><div class="c" style="left:316.2px;top:297.9px;width:84.3px;height:19.61px"><div class="ct" style="left:6.7px;top:-0.9px"><span class="x" style="transform:translateY(0.67px) scaleX(0.9210) skewY(0.03deg);transform-origin:0 50%">Offisiell sats</span></div></div><div class="c" style="left:400.5px;top:297.9px;width:84.15px;height:19.61px"><div class="ct" style="left:6.5px;top:-0.9px"><span class="x" style="transform:translateY(0.67px) scaleX(0.8930) skewY(0.03deg);transform-origin:0 50%">1,00</span></div></div><div class="c" style="left:484.65px;top:297.9px;width:84.2px;height:19.61px"><i class="d" style="left:6.35px;top:10.52px"></i></div><div class="c" style="left:568.85px;top:297.9px;width:84.1px;height:19.61px"><i class="d" style="left:6.3px;top:10.52px"></i></div><div class="c" style="left:652.95px;top:297.9px;width:84.1px;height:19.61px"><div class="ct" style="left:5.4px;top:-0.9px"><span class="x" style="transform:translateY(0.67px) scaleX(0.9210) skewY(0.03deg);transform-origin:0 50%">Passasjertillegg bilg...</span></div></div><div class="c" style="left:737.05px;top:297.9px;width:84.05px;height:19.61px"><i class="d" style="left:5.5px;top:10.52px"></i></div><div class="c" style="left:821.1px;top:297.9px;width:84.1px;height:19.61px"><i class="d" style="left:5.45px;top:10.52px"></i></div><div class="c" style="left:905.2px;top:297.9px;width:84.1px;height:19.61px"><i class="d" style="left:5.35px;top:10.52px"></i></div>
<div class="row " style="top:317.51px;height:19.61px"></div><div class="c" style="left:144.0px;top:317.51px;width:42.0px;height:19.61px"><svg class="ck" viewBox="0 0 9.4 8" width="9.1" height="7.9"><path d="M0.6 4.3 L3.4 7.3 L8.8 0.7" fill="none" stroke="#55a216" stroke-width="1.15" stroke-linecap="round" stroke-linejoin="round"/></svg></div><div class="c" style="left:186.0px;top:317.51px;width:45.87px;height:19.61px"><svg class="wn" viewBox="0 0 14 13.4" width="13.6" height="13"><path d="M7 1.2 L12.9 12.1 L1.1 12.1 Z" fill="#ff8203" stroke="#ff8203" stroke-width="2" stroke-linejoin="round"/><path d="M6.1 4.2 h1.8 l-0.35 4.7 h-1.1 Z" fill="#fff"/><circle cx="7" cy="10.7" r="0.95" fill="#fff"/></svg></div><div class="c" style="left:231.87px;top:317.51px;width:84.33px;height:19.61px"><div class="ct" style="left:6.2px;top:-0.51px"><span class="x" style="transform:translateY(0.33px) scaleX(0.9210) skewY(0.03deg);transform-origin:0 50%">Snøscooter og ATV</span></div></div><div class="c" style="left:316.2px;top:317.51px;width:84.3px;height:19.61px"><div class="ct" style="left:6.7px;top:-0.51px"><span class="x" style="transform:translateY(0.33px) scaleX(0.9210) skewY(0.03deg);transform-origin:0 50%">Offisiell sats</span></div></div><div class="c" style="left:400.5px;top:317.51px;width:84.15px;height:19.61px"><div class="ct" style="left:6.5px;top:-0.51px"><span class="x" style="transform:translateY(0.33px) scaleX(0.8930) skewY(0.03deg);transform-origin:0 50%">7,50</span></div></div><div class="c" style="left:484.65px;top:317.51px;width:84.2px;height:19.61px"><i class="d" style="left:6.35px;top:10.57px"></i></div><div class="c" style="left:568.85px;top:317.51px;width:84.1px;height:19.61px"><i class="d" style="left:6.3px;top:10.57px"></i></div><div class="c" style="left:652.95px;top:317.51px;width:84.1px;height:19.61px"><div class="ct" style="left:5.4px;top:-0.51px"><span class="x" style="transform:translateY(0.33px) scaleX(0.9210) skewY(0.03deg);transform-origin:0 50%">Passasjertillegg bilg...</span></div></div><div class="c" style="left:737.05px;top:317.51px;width:84.05px;height:19.61px"><i class="d" style="left:5.5px;top:10.57px"></i></div><div class="c" style="left:821.1px;top:317.51px;width:84.1px;height:19.61px"><i class="d" style="left:5.45px;top:10.57px"></i></div><div class="c" style="left:905.2px;top:317.51px;width:84.1px;height:19.61px"><i class="d" style="left:5.35px;top:10.57px"></i></div>
<div class="row w" style="top:337.13px;height:19.61px"></div><div class="c" style="left:144.0px;top:337.13px;width:42.0px;height:19.61px"><svg class="ck" viewBox="0 0 9.4 8" width="9.1" height="7.9"><path d="M0.6 4.3 L3.4 7.3 L8.8 0.7" fill="none" stroke="#55a216" stroke-width="1.15" stroke-linecap="round" stroke-linejoin="round"/></svg></div><div class="c" style="left:186.0px;top:337.13px;width:45.87px;height:19.61px"><svg class="wn" viewBox="0 0 14 13.4" width="13.6" height="13"><path d="M7 1.2 L12.9 12.1 L1.1 12.1 Z" fill="#ff8203" stroke="#ff8203" stroke-width="2" stroke-linejoin="round"/><path d="M6.1 4.2 h1.8 l-0.35 4.7 h-1.1 Z" fill="#fff"/><circle cx="7" cy="10.7" r="0.95" fill="#fff"/></svg></div><div class="c" style="left:231.87px;top:337.13px;width:84.33px;height:19.61px"><div class="ct" style="left:6.2px;top:-0.13px"><span class="x" style="transform:translateY(-0.01px) scaleX(0.9210) skewY(0.03deg);transform-origin:0 50%">Tilhenger</span></div></div><div class="c" style="left:316.2px;top:337.13px;width:84.3px;height:19.61px"><div class="ct" style="left:6.7px;top:-0.13px"><span class="x" style="transform:translateY(-0.01px) scaleX(0.9210) skewY(0.03deg);transform-origin:0 50%">Offisiell sats</span></div></div><div class="c" style="left:400.5px;top:337.13px;width:84.15px;height:19.61px"><div class="ct" style="left:6.5px;top:-0.13px"><span class="x" style="transform:translateY(-0.01px) scaleX(0.8930) skewY(0.03deg);transform-origin:0 50%">1,00</span></div></div><div class="c" style="left:484.65px;top:337.13px;width:84.2px;height:19.61px"><i class="d" style="left:6.35px;top:10.61px"></i></div><div class="c" style="left:568.85px;top:337.13px;width:84.1px;height:19.61px"><i class="d" style="left:6.3px;top:10.61px"></i></div><div class="c" style="left:652.95px;top:337.13px;width:84.1px;height:19.61px"><div class="ct" style="left:5.4px;top:-0.13px"><span class="x" style="transform:translateY(-0.01px) scaleX(0.9210) skewY(0.03deg);transform-origin:0 50%">Passasjertillegg bilg...</span></div></div><div class="c" style="left:737.05px;top:337.13px;width:84.05px;height:19.61px"><i class="d" style="left:5.5px;top:10.61px"></i></div><div class="c" style="left:821.1px;top:337.13px;width:84.1px;height:19.61px"><i class="d" style="left:5.45px;top:10.61px"></i></div><div class="c" style="left:905.2px;top:337.13px;width:84.1px;height:19.61px"><i class="d" style="left:5.35px;top:10.61px"></i></div>
<div class="row " style="top:356.75px;height:19.61px"></div><div class="c" style="left:144.0px;top:356.75px;width:42.0px;height:20.31px"><svg class="ck" viewBox="0 0 9.4 8" width="9.1" height="7.9"><path d="M0.6 4.3 L3.4 7.3 L8.8 0.7" fill="none" stroke="#55a216" stroke-width="1.15" stroke-linecap="round" stroke-linejoin="round"/></svg></div><div class="c" style="left:186.0px;top:356.75px;width:45.87px;height:20.31px"></div><div class="c" style="left:231.87px;top:356.75px;width:84.33px;height:20.31px"><div class="ct" style="left:6.2px;top:-0.75px"><span class="x" style="transform:translateY(0.66px) scaleX(0.9210) skewY(0.03deg);transform-origin:0 50%">Tung last</span></div></div><div class="c" style="left:316.2px;top:356.75px;width:84.3px;height:20.31px"><div class="ct" style="left:6.7px;top:-0.75px"><span class="x" style="transform:translateY(0.66px) scaleX(0.9210) skewY(0.03deg);transform-origin:0 50%">Offisiell sats</span></div></div><div class="c" style="left:400.5px;top:356.75px;width:84.15px;height:20.31px"><div class="ct" style="left:6.5px;top:-0.75px"><span class="x" style="transform:translateY(0.66px) scaleX(0.8930) skewY(0.03deg);transform-origin:0 50%">1,00</span></div></div><div class="c" style="left:484.65px;top:356.75px;width:84.2px;height:20.31px"><i class="d" style="left:6.35px;top:10.66px"></i></div><div class="c" style="left:568.85px;top:356.75px;width:84.1px;height:20.31px"><i class="d" style="left:6.3px;top:10.66px"></i></div><div class="c" style="left:652.95px;top:356.75px;width:84.1px;height:20.31px"><div class="ct" style="left:5.4px;top:-0.75px"><span class="x" style="transform:translateY(0.66px) scaleX(0.9210) skewY(0.03deg);transform-origin:0 50%">Bilgodtgjørelse</span></div></div><div class="c" style="left:737.05px;top:356.75px;width:84.05px;height:20.31px"><div class="ct" style="left:5.3px;top:-0.75px"><span class="x" style="transform:translateY(0.66px) scaleX(0.9210) skewY(0.03deg);transform-origin:0 50%">Bilgodtgjørelse, ska...</span></div></div><div class="c" style="left:821.1px;top:356.75px;width:84.1px;height:20.31px"><i class="d" style="left:5.45px;top:10.66px"></i></div><div class="c" style="left:905.2px;top:356.75px;width:84.1px;height:20.31px"><i class="d" style="left:5.35px;top:10.66px"></i></div>
</body></html>
